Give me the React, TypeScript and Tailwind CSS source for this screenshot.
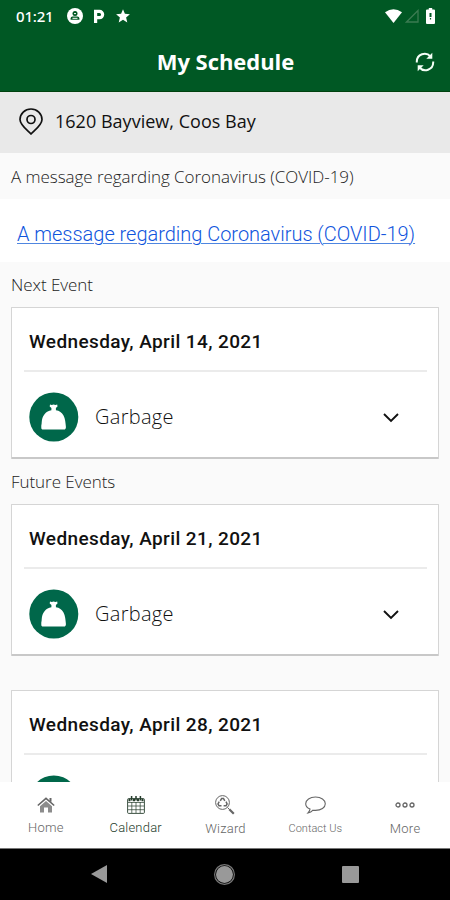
import type { ReactNode } from "react";

interface EventItem {
  date: string;
  kind?: string;
}

const NEXT_EVENT: EventItem = { date: "Wednesday, April 14, 2021", kind: "Garbage" };
const FUTURE_EVENTS: EventItem[] = [
  { date: "Wednesday, April 21, 2021", kind: "Garbage" },
  { date: "Wednesday, April 28, 2021" },
];

function StatusBar() {
  return (
    <div className="flex h-8 items-center justify-between pr-[15px] pl-4 text-white">
      <div className="flex items-center">
        <span className="w-[51px] font-['Noto_Sans'] text-[15px] font-medium tracking-[-0.2px]">01:21</span>
        <svg className="h-4 w-4" viewBox="0 0 16 16">
          <circle cx="8" cy="8" r="8" fill="currentColor" />
          <circle cx="8" cy="5.600" r="2.500" fill="#005824" />
          <path d="M3.600 11.800V10.500q0-1.900 2-1.900h4.800q2 0 2 1.900v1.300z" fill="#005824" />
          <path d="M7 5.600h2M5.500 10.300h5" stroke="white" strokeWidth="1" />
        </svg>
        <svg className="ml-[10px] h-[15px] w-3" viewBox="0 0 12 15" fill="none" stroke="currentColor" strokeWidth="3.200">
          <path d="M2.600 14V2.400h3.900a3 3 0 0 1 0 6.300H4.200" />
        </svg>
        <svg className="ml-[11px] h-[14px] w-[14px]" viewBox="0 0 14 14">
          <path d="m7 .2 1.900 4.600 5 .4-3.800 3.300 1.200 4.900L7 10.800l-4.300 2.600 1.200-4.900L.1 5.200l5-.4z" fill="currentColor" />
        </svg>
      </div>
      <div className="flex items-center">
        <svg className="h-[14px] w-[17px]" viewBox="0 0 17 14">
          <path d="M0 3.200Q8.500-2.600 17 3.200L8.500 14z" fill="currentColor" />
        </svg>
        <svg className="ml-[3px] h-[14px] w-[14px]" viewBox="0 0 14 14">
          <path d="M13 1.500V13H1.500z" fill="none" stroke="#3b7b52" strokeWidth="1.300" />
        </svg>
        <svg className="ml-[7px] h-4 w-[9px]" viewBox="0 0 9 16">
          <path d="M2.800 0h3.400v1.500H8q1 0 1 1V15q0 1-1 1H1q-1 0-1-1V2.500q0-1 1-1h1.800z" fill="currentColor" />
          <path d="M3.500 5h2v4h-2zm.4 5h1.200v1.500H3.900z" fill="#005824" />
        </svg>
      </div>
    </div>
  );
}

function Header() {
  return (
    <header className="h-[92px] shrink-0 border-b border-[#00420f] bg-[#005824]">
      <StatusBar />
      <div className="grid h-[59px] grid-cols-[1fr_auto_1fr] items-center pr-[15px] pb-px">
        <h1 className="col-start-2 pl-4 font-['Open_Sans'] text-[22px] leading-[30px] font-bold tracking-[-0.05px] text-white">
          My Schedule
        </h1>
        <svg className="mt-px h-5 w-5 justify-self-end" viewBox="0 0 20 20" fill="none" stroke="#f4fff7" strokeWidth="2">
          <path d="M1.800 10.500V9.500A7.800 7.800 0 0 1 15.500 4.500M18.200 9.500v1A7.800 7.800 0 0 1 4.500 15.500" />
          <path d="M17.300.8v6h-6zM2.700 19.200v-6h6z" fill="#f4fff7" stroke="none" />
        </svg>
      </div>
    </header>
  );
}

function BagIcon() {
  return (
    <svg className="h-[50px] w-[50px] shrink-0" viewBox="0 0 50 50">
      <circle cx="24.800" cy="25" r="24.500" fill="#00674a" />
      <path
        d="M21 12.600q1.800.7 3.600 0 1.800.7 3.600 0l.3 1.800-1.600 1.600v2.200c3.500.5 6 2.200 7.600 5.300 1.700 3.400 2 7 2.400 11.300q.2 2.800-2 2.800H14.300q-2.300 0-2-2.700c-.2-1.600.4-2.600.4-4.300.2-3.500.8-6.200 3-8.700 1.700-2 4-3.300 6.700-3.700V16l-1.700-1.600z"
        fill="white"
      />
    </svg>
  );
}

function EventCard({ date, kind }: EventItem) {
  return (
    <article className="mx-[11px] h-[152px] shrink-0 rounded-[1px] border border-b-2 border-[#d5d5d5] border-b-[#c8c8c8] bg-white pr-[11px] pl-3">
      <div className="flex h-[64px] items-center border-b-2 border-[#ebebeb] pt-[6px] pl-[5px]">
        <h2 className="font-['Roboto'] text-[19px] font-medium tracking-[0.4px] text-[#111]">{date}</h2>
      </div>
      <div className="flex h-[85px] items-center pt-1 pl-[5px]">
        <BagIcon />
        <span className="ml-4 flex-1 pt-px font-['Open_Sans'] text-[20px] font-light tracking-[0.3px] text-[#111]">{kind}</span>
        <svg className="mt-0.5 mr-7 h-[10px] w-4" viewBox="0 0 16 10" fill="none" stroke="#111" strokeWidth="1.900">
          <path d="m1 1 7 7 7-7" />
        </svg>
      </div>
    </article>
  );
}

function SectionLabel({ children }: { children: ReactNode }) {
  return (
    <div className="flex h-[45px] shrink-0 items-center px-[11px] font-['Open_Sans'] text-[17px] font-light tracking-[-0.05px] text-[#222]">
      {children}
    </div>
  );
}

function HomeIcon() {
  return (
    <svg className="h-4 w-[18px]" viewBox="0 0 18 16" fill="none" stroke="currentColor">
      <path d="M.8 8.500 9 1.300l8.200 7.200" strokeWidth="1.600" />
      <path d="M13.500 1v3.700" strokeWidth="2" />
      <path d="m3 9.200 6-5.200 6 5.200V15.500h-4v-5H7v5H3z" fill="currentColor" fillOpacity=".75" stroke="none" />
    </svg>
  );
}

function CalendarIcon() {
  return (
    <svg className="h-[18px] w-[18px]" viewBox="0 0 18 18" fill="none" stroke="currentColor">
      <rect x=".6" y="2.600" width="16.800" height="14.800" rx="1" strokeWidth=".9" />
      <path d="M1.500 4h2M5.800 4H8M10 4h2.200M14.500 4h2" strokeWidth="2.600" />
      <path d="M4.600 0v4.500M9 0v4.500M13.400 0v4.500" strokeWidth="1.500" />
      <path d="M1 6.500h16M1 10h16M1 13.700h16M4.800 6v11M9 6v11M13.200 6v11" strokeWidth=".7" />
    </svg>
  );
}

function WizardIcon() {
  return (
    <svg className="h-5 w-5" viewBox="0 0 20 20" fill="none" stroke="currentColor">
      <circle cx="7.500" cy="7.500" r="6.900" strokeWidth="1" />
      <path d="m5.300 5.800 1.300-2.200h1.900l1.300 2.200M11 6.700l1.100 2.200-1 1.900H8.600M6.500 10.800H4L3 8.900l1.200-2.200" strokeWidth="1.500" />
      <path d="m12.500 12.500 2 2" />
      <path d="m14.300 14.300 4.500 4.500" strokeWidth="2.200" />
    </svg>
  );
}

function ContactIcon() {
  return (
    <svg className="h-[18px] w-[21px]" viewBox="0 0 21 18" fill="none" stroke="currentColor" strokeWidth="1.100">
      <path d="M5 13.100C2.300 11.900.7 10 .7 7.700.7 3.900 4.900 1 10.500 1s9.800 2.900 9.800 6.700-4.200 6.700-9.800 6.700q-1.300 0-2.500-.2-2 2.200-5 2.700 1.700-1.700 2-3.800z" />
    </svg>
  );
}

function MoreIcon() {
  return (
    <svg className="h-[6px] w-5" viewBox="0 0 20 6" fill="none" stroke="currentColor" strokeWidth="1.300">
      <circle cx="3" cy="3" r="2" />
      <circle cx="10" cy="3" r="2" />
      <circle cx="17" cy="3" r="2" />
    </svg>
  );
}

const TABS = [
  { label: "Home", icon: <HomeIcon />, color: "text-[#666]", text: "text-[13px] tracking-[0.3px] pt-px" },
  { label: "Calendar", icon: <CalendarIcon />, color: "text-[#263d2c]", text: "text-[13px] tracking-[0.2px] pt-px" },
  { label: "Wizard", icon: <WizardIcon />, color: "text-[#666]", text: "text-[13px] tracking-[0.2px] pt-0.5" },
  { label: "Contact Us", icon: <ContactIcon />, color: "text-[#666]", text: "text-[11px] pt-0.5" },
  { label: "More", icon: <MoreIcon />, color: "text-[#666]", text: "text-[13px] tracking-[0.3px] pt-0.5" },
];

function TabBar() {
  return (
    <nav className="grid h-[66px] shrink-0 grid-cols-5 bg-white pt-3 pl-px">
      {TABS.map((tab) => (
        <div key={tab.label} className={`flex flex-col items-center ${tab.color}`}>
          <div className="flex h-[22px] items-center">{tab.icon}</div>
          <span className={`font-['Roboto'] leading-[22px] font-light whitespace-nowrap ${tab.text}`}>{tab.label}</span>
        </div>
      ))}
    </nav>
  );
}

function SystemNav() {
  return (
    <div className="flex h-[52px] shrink-0 items-center justify-between border-t border-[#777] bg-black pr-[91px] pb-px pl-[91px] text-[#999]">
      <svg className="h-[18px] w-4" viewBox="0 0 16 18">
        <path d="M16 0v18L0 9z" fill="currentColor" />
      </svg>
      <svg className="h-[21px] w-[21px]" viewBox="0 0 21 21">
        <circle cx="10.500" cy="10.500" r="9.900" fill="none" stroke="#777" strokeWidth="1.200" />
        <circle cx="10.500" cy="10.500" r="8.500" fill="currentColor" />
      </svg>
      <div className="h-[17px] w-[17px] rounded-[1px] bg-[#999]" />
    </div>
  );
}

export default function App() {
  return (
    <div className="flex h-[900px] w-[450px] flex-col overflow-hidden bg-[#fafafa]">
      <Header />
      <div className="flex h-[61px] shrink-0 items-center bg-[#e9e9e9] pb-[3px] pl-[19px]">
        <svg className="h-[27px] w-6" viewBox="0 0 24 27" fill="none" stroke="#111" strokeWidth="1.700">
          <path d="M12 26C8 22 1 17 1 11.500a11 10.500 0 0 1 22 0C23 17 16 22 12 26z" />
          <circle cx="12" cy="11.500" r="4" />
        </svg>
        <span className="ml-3 font-['Open_Sans'] text-[18px] tracking-[0.02px] text-[#111]">1620 Bayview, Coos Bay</span>
      </div>
      <div className="shrink-0 pt-px">
        <SectionLabel>A message regarding Coronavirus (COVID-19)</SectionLabel>
      </div>
      <div className="flex h-[63px] shrink-0 items-center bg-white pt-[6px] pl-[17px]">
        <a
          href="#covid"
          className="font-['Roboto'] text-[20px] font-light tracking-[-0.02px] text-[#0f55dd] underline decoration-[#4f86e0] decoration-1 underline-offset-2"
        >
          A message regarding Coronavirus (COVID-19)
        </a>
      </div>
      <main className="flex min-h-0 flex-1 flex-col overflow-hidden">
        <SectionLabel>Next Event</SectionLabel>
        <EventCard {...NEXT_EVENT} />
        <SectionLabel>Future Events</SectionLabel>
        <div className="flex shrink-0 flex-col gap-[34px]">
          {FUTURE_EVENTS.map((event) => (
            <EventCard key={event.date} {...event} />
          ))}
        </div>
      </main>
      <TabBar />
      <SystemNav />
    </div>
  );
}
